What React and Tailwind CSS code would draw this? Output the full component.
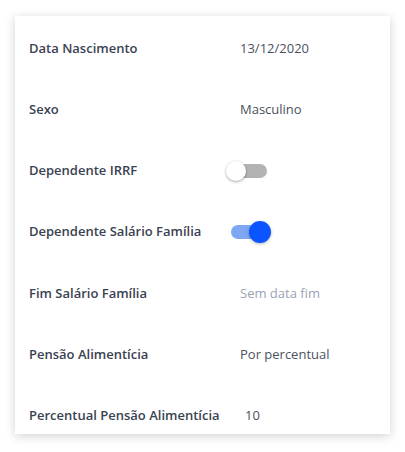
import React from "react";

function Toggle({ on }) {
  return (
    <div className="relative w-[36px] h-[14px]">
      <div className={"absolute inset-0 rounded-full " + (on ? "bg-[#7fa6f2]" : "bg-[#b3b3b3]")} />
      {on ? (
        <div className="absolute left-[18px] top-[-4px] w-[22px] h-[22px] rounded-full bg-[#0a55ff] shadow-[0_1px_3px_rgba(0,0,0,0.3)]" />
      ) : (
        <div className="absolute left-[-5px] top-[-3px] w-[20px] h-[20px] rounded-full bg-white shadow-[0_1px_3px_rgba(0,0,0,0.35)]" />
      )}
    </div>
  );
}

const rows = [
  { label: "Data Nascimento", value: "13/12/2020" },
  { label: "Sexo", value: "Masculino" },
  { label: "Dependente IRRF", toggle: false },
  { label: "Dependente Salário Família", toggle: true },
  { label: "Fim Salário Família", value: "Sem data fim", muted: true },
  { label: "Pensão Alimentícia", value: "Por percentual" },
  { label: "Percentual Pensão Alimentícia", value: "10", shift: true },
];

export default function App() {
  return (
    <div className="w-[405px] h-[452px] bg-white pt-[16px] pl-[15px]" style={{ fontFamily: '"Open Sans", "Noto Sans", sans-serif' }}>
      <div className="w-[375px] h-[418px] bg-white overflow-hidden shadow-[0_2px_10px_rgba(0,0,0,0.18)] pl-[14px] pt-[2px]">
        {rows.map((r, i) => (
          <div key={i} className="flex items-center h-[61.2px]">
            <div className="w-[211px] shrink-0 text-[13px] font-semibold text-[#3a4252] whitespace-nowrap">{r.label}</div>
            {r.toggle !== undefined ? (
              <div className="ml-[-9px]"><Toggle on={r.toggle} /></div>
            ) : (
              <div className={"text-[13px] whitespace-nowrap " + (r.muted ? "text-[#9aa3b7]" : "text-[#4a5160]") + (r.shift ? " ml-[5px]" : "")}>{r.value}</div>
            )}
          </div>
        ))}
      </div>
    </div>
  );
}
